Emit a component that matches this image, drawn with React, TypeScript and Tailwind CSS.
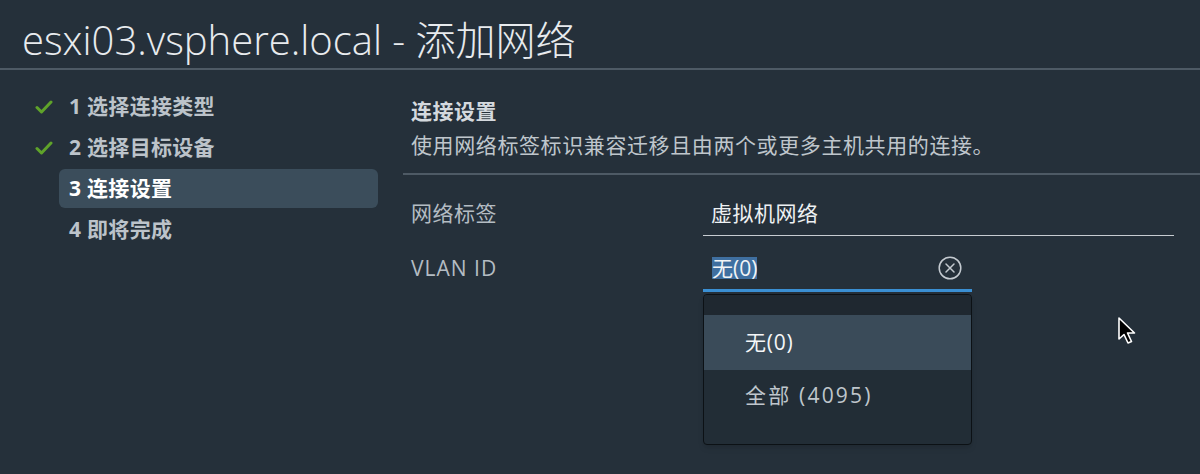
import React from 'react'

const steps = [
  { label: '1 选择连接类型', done: true },
  { label: '2 选择目标设备', done: true },
  { label: '3 连接设置', done: false, active: true },
  { label: '4 即将完成', done: false },
]

function Check() {
  return (
    <svg width="18" height="14" viewBox="0 0 18 14" fill="none">
      <path d="M2 7.5 L6.5 12 L16 2" stroke="#5fa32a" strokeWidth="3" strokeLinecap="round" strokeLinejoin="round" />
    </svg>
  )
}

function ClearIcon() {
  return (
    <svg width="24" height="24" viewBox="0 0 24 24" fill="none">
      <circle cx="12" cy="12" r="10.8" stroke="#c4cad0" strokeWidth="1.5" />
      <path d="M8 8 L16 16 M16 8 L8 16" stroke="#c4cad0" strokeWidth="1.5" strokeLinecap="round" />
    </svg>
  )
}

function Cursor() {
  return (
    <svg width="22" height="30" viewBox="0 0 22 30">
      <path d="M2 2 L2 23 L7 18.5 L11 27 L14.5 25.5 L10.5 17 L17.5 17 Z" fill="#000" stroke="#fff" strokeWidth="1.6" strokeLinejoin="round" />
    </svg>
  )
}

export default function App() {
  return (
    <div
      className="relative w-[1200px] h-[474px] overflow-hidden bg-[#25303a] text-[#c3c9cf]"
      style={{ fontFamily: '"Open Sans", "Noto Sans CJK SC", sans-serif' }}
    >
      {/* header */}
      <div className="h-[70px] pl-[22px] pt-[16px] border-b-2 border-[#4e5a65]">
        <h1 className="text-[40px] leading-[48px] font-light text-[#e8ebee] whitespace-nowrap">
          esxi03.vsphere.local - 添加网络
        </h1>
      </div>

      <div className="flex">
        {/* steps */}
        <div className="w-[403px] pl-[22px] pr-[25px] pt-[16px] shrink-0">
          {steps.map((s) => (
            <div key={s.label} className="flex items-center h-[41px]">
              <div className="w-[37px] flex items-center pl-[13px]">{s.done && <Check />}</div>
              <div
                className={
                  'flex-1 h-[39px] flex items-center px-[10px] rounded-md text-[21px] tracking-[0.3px] font-bold ' +
                  (s.active ? 'bg-[#3b4d5b] text-white' : 'text-[#bcc3ca]')
                }
              >
                {s.label}
              </div>
            </div>
          ))}
        </div>

        {/* content */}
        <div className="flex-1 pt-[27px]">
          <div className="pl-[8px]">
            <div className="text-[21px] leading-[28px] tracking-[0.5px] font-bold text-[#d4d9de]">连接设置</div>
            <div className="mt-[6px] text-[21px] leading-[28px] tracking-[0.6px] text-[#bfc6cc]">
              使用网络标签标识兼容迁移且由两个或更多主机共用的连接。
            </div>
          </div>
          <div className="mt-[14px] h-[2px] bg-[#4e5a65]" />

          <div className="mt-[24px] flex">
            <div className="w-[300px] pl-[8px] text-[21px] leading-[28px] tracking-[0.5px] text-[#b4bcc3]">网络标签</div>
            <div className="w-[471px] pl-[8px] pb-[8px] border-b border-[#c7ccd1] text-[21px] leading-[28px] tracking-[0.5px] text-[#eef1f3]">
              虚拟机网络
            </div>
          </div>

          <div className="mt-[18px] flex">
            <div className="w-[300px] pl-[8px] text-[21px] leading-[28px] tracking-[1px] text-[#b4bcc3]">VLAN ID</div>
            <div className="relative w-[269px]">
              <div className="flex items-center justify-between pl-[9px] pr-[10px] pb-[7px] border-b-[3px] border-[#3a8fd3]">
                <div className="h-[28px] flex items-center">
                  <span className="bg-[#3f6fa0] text-[#f2f4f6] text-[21px] leading-[22px]">无(0)</span>
                </div>
                <ClearIcon />
              </div>

              {/* dropdown */}
              <div className="absolute left-0 top-[40px] w-[269px] h-[151px] rounded-[4px] border border-[#0c1115] bg-[#222d36] overflow-hidden shadow-md">
                <div className="h-[20px] bg-[#1f2830]" />
                <div className="h-[55px] flex items-center pl-[41px] bg-[#3a4b59] text-[21px] tracking-[0.8px] text-[#f4f6f8]">无(0)</div>
                <div className="h-[51px] flex items-center pl-[41px] text-[21px] tracking-[2.2px] text-[#bfc6cc]">全部 (4095)</div>
              </div>
            </div>
          </div>
        </div>
      </div>

      <div className="absolute left-[1117px] top-[316px]">
        <Cursor />
      </div>
    </div>
  )
}
